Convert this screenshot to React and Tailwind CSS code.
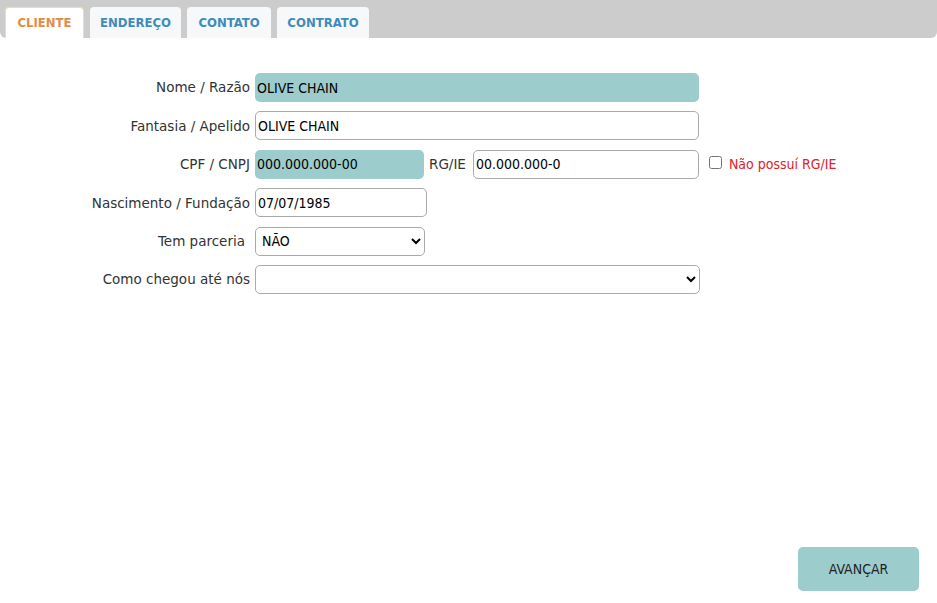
import React from 'react';

const LABEL = "w-[255px] shrink-0 text-right pr-[5px] text-[13.5px] text-[#333] font-['DejaVu_Sans',sans-serif]";
const FIELD = "h-[29px] rounded-[5px] px-[2px] text-[14px] text-black font-['DejaVu_Sans_Condensed','DejaVu_Sans',sans-serif] outline-none";

const TABS = [
  { label: 'CLIENTE', active: true, w: 'w-[79px]' },
  { label: 'ENDEREÇO', w: 'w-[91px]' },
  { label: 'CONTATO', w: 'w-[84px]' },
  { label: 'CONTRATO', w: 'w-[92px]' },
];

const Row = ({ label, children, labelClass = '' }) => (
  <div className="flex items-center h-[29px]">
    <span className={`${LABEL} ${labelClass}`}>{label}</span>
    {children}
  </div>
);

export default function App() {
  return (
    <div className="w-[937px] h-[603px] bg-white flex flex-col overflow-hidden">
      {/* Tabs */}
      <div className="h-[38px] bg-[#cccccc] rounded-b-[6px] flex items-end gap-[6px] pl-[5px]">
        {TABS.map(t => (
          <div
            key={t.label}
            className={`${t.w} h-[31px] rounded-t-[4px] flex items-center justify-center text-[13px] font-semibold font-['DejaVu_Sans_Condensed','DejaVu_Sans',sans-serif] ${
              t.active
                ? 'bg-white border border-b-0 border-[#f1dfa0] text-[#e08d45]'
                : 'bg-[#f7f8f9] text-[#3d8cbb]'
            }`}
          >
            {t.label}
          </div>
        ))}
      </div>

      {/* Form */}
      <div className="flex flex-col gap-[9.4px] pt-[35px]">
        <Row label="Nome / Razão">
          <input readOnly value="OLIVE CHAIN" className={`${FIELD} w-[444px] bg-[#9dcccc]`} />
        </Row>
        <Row label="Fantasia / Apelido">
          <input readOnly value="OLIVE CHAIN" className={`${FIELD} w-[444px] bg-white border border-[#aaaaaa]`} />
        </Row>
        <Row label="CPF / CNPJ">
          <input readOnly value="000.000.000-00" className={`${FIELD} w-[169px] bg-[#9dcccc]`} />
          <span className="ml-[5px] mr-[7px] text-[13.5px] text-[#333] font-['DejaVu_Sans',sans-serif]">RG/IE</span>
          <input readOnly value="00.000.000-0" className={`${FIELD} w-[226px] bg-white border border-[#aaaaaa]`} />
          <label className="flex items-center ml-[10px] gap-[7px] text-[14px] text-[#e0202a] font-['DejaVu_Sans_Condensed','DejaVu_Sans',sans-serif]">
            <input type="checkbox" className="w-[13px] h-[13px] -mt-[3px]" />
            Não possuí RG/IE
          </label>
        </Row>
        <Row label="Nascimento / Fundação">
          <input readOnly value="07/07/1985" className={`${FIELD} w-[172px] bg-white border border-[#aaaaaa]`} />
        </Row>
        <Row label="Tem parceria" labelClass="pr-[10px]">
          <select defaultValue="NAO" className={`${FIELD} w-[170px] bg-white border border-[#aaaaaa]`}>
            <option value="NAO">NÃO</option>
            <option value="SIM">SIM</option>
          </select>
        </Row>
        <Row label="Como chegou até nós">
          <select defaultValue="" className={`${FIELD} w-[445px] bg-white border border-[#aaaaaa]`}>
            <option value=""></option>
          </select>
        </Row>
      </div>

      {/* Footer */}
      <div className="mt-auto flex justify-end pr-[18px] pb-[12px]">
        <button className="w-[121px] h-[44px] rounded-[5px] bg-[#9dcccc] text-[14px] text-[#222] font-['DejaVu_Sans_Condensed','DejaVu_Sans',sans-serif]">
          AVANÇAR
        </button>
      </div>
    </div>
  );
}
